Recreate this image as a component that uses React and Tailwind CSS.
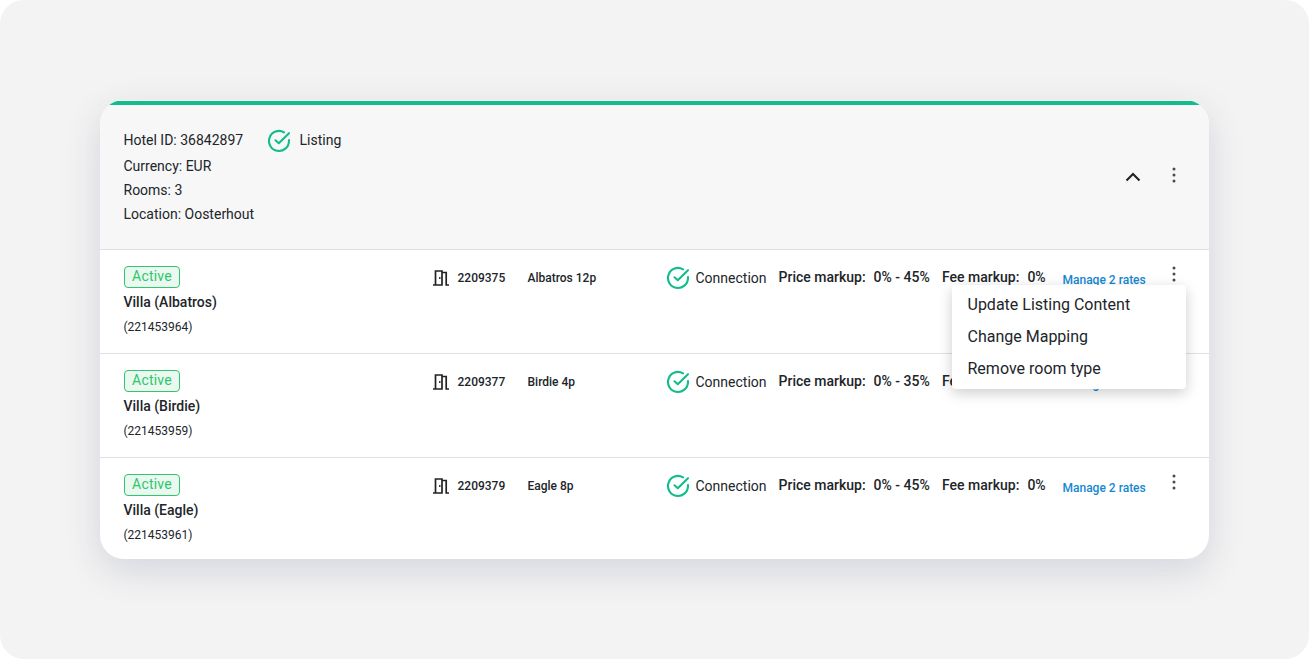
const rooms = [
  { name: "Villa (Albatros)", code: "(221453964)", id: "2209375", title: "Albatros 12p", price: "0% - 45%", fee: "0%" },
  { name: "Villa (Birdie)", code: "(221453959)", id: "2209377", title: "Birdie 4p", price: "0% - 35%", fee: "0%" },
  { name: "Villa (Eagle)", code: "(221453961)", id: "2209379", title: "Eagle 8p", price: "0% - 45%", fee: "0%" },
];

const menuItems = ["Update Listing Content", "Change Mapping", "Remove room type"];

function CheckIcon() {
  return (
    <svg width="24" height="24" viewBox="0 0 24 24" fill="none" stroke="#10bd8b" strokeWidth="2.1" strokeLinecap="round" strokeLinejoin="round">
      <path d="M22 11v1a10 10 0 1 1-5-8.7" />
      <path d="M8.5 11.3l3.3 3L22 4.2" />
    </svg>
  );
}

function DoorIcon() {
  return (
    <svg width="16" height="16" viewBox="0 0 16 16" fill="none" stroke="#222" strokeWidth="1.7">
      <path d="M0 15h9.200M2.500 15V1h6.500v14.800M9.200 2.500h4v12.500h2.800" />
      <circle cx="6.800" cy="8" r=".9" fill="#222" stroke="none" />
    </svg>
  );
}

function DotsIcon() {
  return (
    <svg width="4" height="16" viewBox="0 0 4 16" fill="#4b4b4b">
      <circle cx="2" cy="2" r="1.5" />
      <circle cx="2" cy="8" r="1.5" />
      <circle cx="2" cy="14" r="1.5" />
    </svg>
  );
}

function RoomRow({ room, menuOpen }) {
  return (
    <div className="flex h-[104px] items-start border-t border-[#e0e0e0] pl-[23.5px] whitespace-nowrap">
      <div className="w-[309.5px] pt-4">
        <div className="ml-[0.5px] flex h-[22px] w-14 items-center justify-center rounded border border-[#2dc76d] bg-[#eaf8f0] pb-[2px] text-sm leading-[18px] tracking-[0.2px] text-[#2dc76d]">
          Active
        </div>
        <div className="mt-1 text-sm leading-5 font-medium">{room.name}</div>
        <div className="mt-[5px] text-xs leading-5">{room.code}</div>
      </div>
      <div className="flex w-[94.5px] items-center gap-[8.5px] pt-[18px] text-xs leading-5 font-medium">
        <DoorIcon />
        {room.id}
      </div>
      <div className="w-[138.500px] pt-[18px] text-xs leading-5 font-medium">{room.title}</div>
      <div className="flex w-[112.5px] items-center gap-[5.5px] pt-4 text-sm">
        <CheckIcon />
        Connection
      </div>
      <div className="flex w-[163.5px] gap-2 pt-[17px] text-sm leading-5 font-medium">
        <span>Price markup:</span>
        <span>{room.price}</span>
      </div>
      <div className="flex w-[120.5px] gap-2 pt-[17px] text-sm leading-5 font-medium">
        <span>Fee markup:</span>
        <span>{room.fee}</span>
      </div>
      <a className="w-[109.5px] pt-5 text-xs leading-5 font-medium text-[#1588d1]">Manage 2 rates</a>
      <button className="relative mt-4">
        <DotsIcon />
        {menuOpen && (
          <span className="absolute top-[19px] right-[-10px] z-10 flex h-[104px] w-[234px] flex-col rounded bg-white pt-1 pl-[15.5px] text-left text-base shadow-[0_4px_14px_rgba(0,0,0,0.2)]">
            {menuItems.map((item) => (
              <span key={item} className="h-8 leading-8">{item}</span>
            ))}
          </span>
        )}
      </button>
    </div>
  );
}

export default function App() {
  return (
    <div className="bg-white font-[Roboto,sans-serif] text-[#212529]">
      <div className="h-[659px] rounded-3xl bg-[#f3f3f3] px-[100px] pt-[100px]">
        <div className="h-[459px] w-[1109px] rounded-3xl bg-white shadow-[0_12px_36px_rgba(40,50,100,0.15)]">
          <div className="flex h-[149px] flex-col overflow-hidden rounded-t-3xl bg-[#f7f7f7]">
            <div className="mt-px h-1 shrink-0 bg-[#10bd8b]" />
            <div className="flex grow items-start pt-[23px] pl-[23.5px] text-sm leading-6">
              <div className="grow">
                <div className="flex h-[26px] items-center">
                  <span className="w-[143.5px] pb-0.5">Hotel ID: 36842897</span>
                  <CheckIcon />
                  <span className="ml-[8.5px] pb-0.5">Listing</span>
                </div>
                <div>Currency: EUR</div>
                <div>Rooms: 3</div>
                <div>Location: Oosterhout</div>
              </div>
              <svg className="mt-11" width="16" height="10" viewBox="0 0 16 10" fill="none" stroke="#222" strokeWidth="2.100">
                <path d="M1.500 8.500L8 2l6.500 6.500" />
              </svg>
              <div className="mt-[39px] mr-[33px] ml-[31px]">
                <DotsIcon />
              </div>
            </div>
          </div>
          {rooms.map((room, i) => (
            <RoomRow key={room.id} room={room} menuOpen={i === 0} />
          ))}
        </div>
      </div>
    </div>
  );
}
